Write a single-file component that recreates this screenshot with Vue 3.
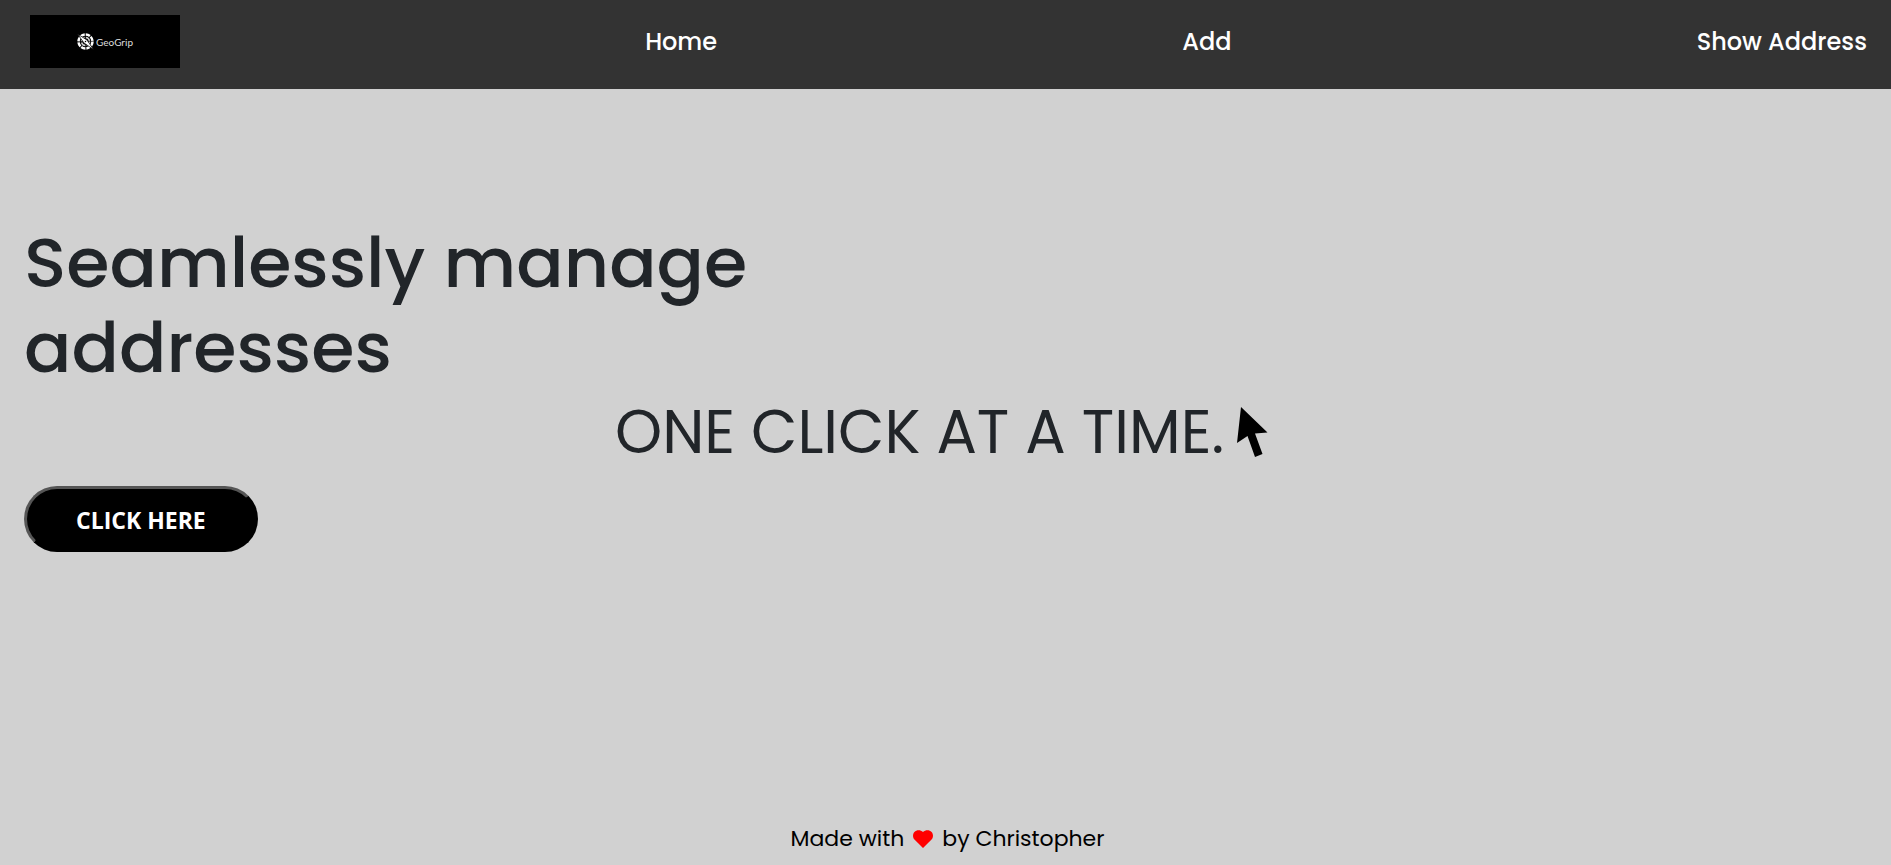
<script setup>
const links = [
  { label: 'Home', href: '#home' },
  { label: 'Add', href: '#add' },
  { label: 'Show Address', href: '#addresses' },
]
</script>

<template>
  <div class="page">
    <header>
      <nav class="navbar" aria-label="Main">
        <a class="logo" href="#home">
          <svg class="logo-mark" viewBox="0 0 34 34" aria-hidden="true">
            <circle cx="17" cy="17" r="14" fill="none" stroke="#fff" stroke-width="5" stroke-dasharray="9 2" />
            <circle cx="17" cy="17" r="8" fill="none" stroke="#ccc" stroke-width="3" stroke-dasharray="10 2.5" />
            <path d="M1 2 L20 14 L33 33 L14 20 Z" fill="#fff" stroke="#000" stroke-width="1.5" />
            <circle cx="17" cy="17" r="1.5" fill="#000" />
          </svg>
          <span>GeoGrip</span>
        </a>
        <a v-for="link in links" :key="link.label" class="nav-link" :href="link.href">{{ link.label }}</a>
      </nav>
    </header>

    <main class="hero">
      <h1>Seamlessly manage addresses</h1>
      <p class="tagline">
        <span>ONE CLICK AT A TIME.</span>
        <svg class="pointer" viewBox="0 0 48 60" aria-hidden="true">
          <path d="M13 5 L39.5 30.5 L27 31.5 L34.5 52 L27 55 L19.5 34 L9 41 Z" />
        </svg>
      </p>
      <button type="button" class="cta">CLICK HERE</button>
    </main>

    <footer>
      <span>Made with</span>
      <svg class="heart" viewBox="0 0 20 18" aria-label="love" role="img">
        <path d="M10 18 L1.7 9.8 C-0.5 7.5 -0.5 4 1.4 2 C3.6 -0.4 7.5 -0.4 10 2 C12.5 -0.4 16.4 -0.4 18.6 2 C20.5 4 20.5 7.5 18.3 9.8 Z" />
      </svg>
      <span>by Christopher</span>
    </footer>
  </div>
</template>

<style>
body {
  margin: 0;
  background: #d1d1d1;
}
</style>

<style scoped>
.page {
  display: flex;
  flex-direction: column;
  min-height: 100vh;
  box-sizing: border-box;
  background: #d1d1d1;
  color: #212529;
  font-family: Poppins, Inter, sans-serif;
}

.navbar {
  display: flex;
  justify-content: space-between;
  align-items: flex-start;
  padding: 15px 24px 21px 30px;
  background: #333;
}

.logo {
  display: flex;
  align-items: center;
  justify-content: center;
  gap: 2px;
  width: 150px;
  height: 53px;
  background: #000;
  color: #ddd;
  font: 10px/16px Lato, sans-serif;
  text-decoration: none;
}

.logo-mark {
  width: 17px;
  height: 17px;
}

.nav-link {
  padding-top: 9px;
  color: #fff;
  font-size: 24px;
  font-weight: 500;
  line-height: 36px;
  text-decoration: none;
}

.hero {
  display: flex;
  flex: 1;
  flex-direction: column;
  align-items: flex-start;
  padding: 131px 24px 0;
}

h1 {
  max-width: 800px;
  margin: 0;
  font-size: 70px;
  font-weight: 500;
  line-height: 85px;
}

.tagline {
  display: flex;
  align-self: center;
  align-items: center;
  gap: 4px;
  margin: 0;
  font-size: 60px;
  line-height: 84px;
}

.pointer {
  width: 48px;
  height: 60px;
  fill: #000;
}

.cta {
  margin-top: 12px;
  padding: 13px 49px 11px;
  border: 3px outset #000;
  border-color: #555 #000 #000 #555;
  border-radius: 33px;
  background: #000;
  color: #fff;
  font: 700 23px/36px "Open Sans", sans-serif;
}

footer {
  display: flex;
  align-items: center;
  justify-content: center;
  gap: 9px;
  padding: 0 0 8px 4px;
  color: #000;
  font-size: 22px;
  line-height: 36px;
}

.heart {
  width: 20px;
  height: 18px;
  fill: #f00;
}
</style>
